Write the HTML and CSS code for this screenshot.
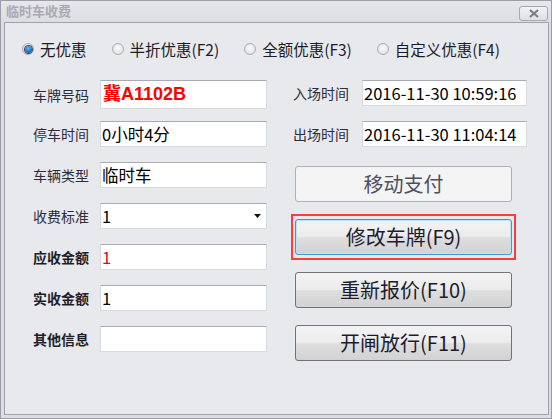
FILE: index.html
```html
<!DOCTYPE html>
<html lang="zh-CN">
<head>
<meta charset="utf-8">
<title>临时车收费</title>
<link rel="stylesheet" href="styles.css">
</head>
<body>
<div class="window">
  <div class="titlebar">
    <span class="title">临时车收费</span>
    <span class="close"><svg width="12" height="9" viewBox="0 0 12 9"><path d="M2 1 L10 8 M10 1 L2 8" stroke="#7b7c86" stroke-width="2.2" fill="none"/></svg></span>
  </div>
  <div class="frame">
    <div class="radios">
      <label class="opt"><span class="radio on"></span><span>无优惠</span></label>
      <label class="opt"><span class="radio"></span><span>半折优惠(F2)</span></label>
      <label class="opt"><span class="radio"></span><span>全额优惠(F3)</span></label>
      <label class="opt"><span class="radio"></span><span>自定义优惠(F4)</span></label>
    </div>
    <div class="cols">
      <div class="col-left">
        <div class="row row-tall"><span class="lbl">车牌号码</span><div class="inp inp-tall plate">冀A1102B</div></div>
        <div class="row"><span class="lbl">停车时间</span><div class="inp">0小时4分</div></div>
        <div class="row"><span class="lbl">车辆类型</span><div class="inp">临时车</div></div>
        <div class="row"><span class="lbl">收费标准</span><div class="inp select"><span>1</span><svg class="caret" width="7" height="4" viewBox="0 0 7 4"><path d="M0 0 H7 L3.5 4 Z" fill="#111"/></svg></div></div>
        <div class="row"><span class="lbl bold">应收金额</span><div class="inp red">1</div></div>
        <div class="row"><span class="lbl bold">实收金额</span><div class="inp">1</div></div>
        <div class="row"><span class="lbl bold">其他信息</span><div class="inp"></div></div>
      </div>
      <div class="col-right">
        <div class="row"><span class="lbl lbl-r">入场时间</span><div class="inp inp-r">2016-11-30 10:59:16</div></div>
        <div class="row"><span class="lbl lbl-r">出场时间</span><div class="inp inp-r">2016-11-30 11:04:14</div></div>
        <div class="buttons">
          <button class="btn disabled">移动支付</button>
          <div class="focus-ring"><button class="btn focused">修改车牌(F9)</button></div>
          <button class="btn">重新报价(F10)</button>
          <button class="btn">开闸放行(F11)</button>
        </div>
      </div>
    </div>
  </div>
</div>
</body>
</html>
```

FILE: styles.css
```css
* { box-sizing: border-box; }
html, body { margin: 0; padding: 0; }
body {
  width: 552px;
  height: 419px;
  background: #dcdde3;
  font-family: "Noto Sans CJK SC", "Noto Sans", sans-serif;
  color: #22222e;
}
.window {
  width: 552px;
  height: 419px;
  border: 1px solid #9c9da7;
  padding: 0 2px 3px 3px;
  display: flex;
  flex-direction: column;
  background: linear-gradient(#e6e7eb, #dcdde3 22px);
}
.titlebar {
  height: 21px;
  display: flex;
  align-items: center;
  justify-content: space-between;
  padding-left: 2px;
}
.title {
  font-size: 13px;
  font-weight: bold;
  color: #a9aab2;
  line-height: 13px;
  margin-top: -2px;
}
.close {
  width: 29px;
  height: 15px;
  margin-top: 3px;
  margin-right: 1px;
  border: 1px solid #a7a8b2;
  border-radius: 3px;
  background: linear-gradient(#f2f2f4, #dfe0e4);
  display: flex;
  align-items: center;
  justify-content: center;
}
.frame {
  flex: 1;
  border: 1px solid #a0a1ab;
  background: #e8e9ed;
}
.radios {
  display: flex;
  align-items: center;
  height: 20px;
  margin-top: 16px;
  padding-left: 17px;
  gap: 25px;
  font-size: 15.5px;
  color: #1c1c28;
}
.opt {
  display: flex;
  align-items: center;
  gap: 6px;
}
.radio {
  width: 12px;
  height: 12px;
  border-radius: 50%;
  border: 1px solid #a9abb3;
  background: radial-gradient(circle at 50% 40%, #fbfbfb, #d9dade);
  display: flex;
  align-items: center;
  justify-content: center;
}
.radio.on::after {
  content: "";
  width: 7px;
  height: 7px;
  border-radius: 50%;
  background: radial-gradient(circle at 45% 35%, #5cc0ff, #1a6fc0 60%, #0b3f7a);
  box-shadow: 0 0 0 1px #3b4a5c;
}
.cols {
  display: flex;
  margin-top: 21px;
  padding-left: 28px;
}
.col-left {
  width: 234px;
  display: flex;
  flex-direction: column;
  gap: 15px;
}
.row {
  display: flex;
  align-items: center;
  height: 26px;
}
.row-tall {
  height: 29px;
  margin-bottom: -3px;
}
.lbl {
  width: 67px;
  flex: none;
  font-size: 14px;
  color: #2c2c3a;
  white-space: nowrap;
}
.lbl.bold { font-weight: bold; color: #1e1e2a; }
.inp {
  width: 167px;
  height: 26px;
  background: #fff;
  border: 1px solid #d8dae0;
  border-top-color: #a9abb3;
  font-size: 16.5px;
  line-height: 24px;
  padding-left: 1px;
  color: #000;
  white-space: nowrap;
  overflow: hidden;
}
.inp-tall { height: 29px; line-height: 27px; padding-left: 2px; }
.plate { color: #ff0000; font-weight: bold; font-size: 18px; font-family: "Liberation Sans", "Noto Sans CJK SC", sans-serif; }
.red { color: #e8001c; }
.select {
  display: flex;
  justify-content: space-between;
  align-items: center;
  padding-right: 5px;
}
.caret { flex: none; }
.col-right {
  margin-left: 26px;
  display: flex;
  flex-direction: column;
  gap: 15px;
}
.lbl-r { width: 69px; }
.inp-r { width: 165px; }
.buttons {
  display: flex;
  flex-direction: column;
  align-items: flex-start;
  gap: 17px;
  margin-top: 4px;
  padding-left: 2px;
}
.btn {
  width: 217px;
  height: 36px;
  border: 1px solid #717178;
  border-radius: 3px;
  background: linear-gradient(#f3f3f3 0%, #ececec 48%, #dedede 52%, #d2d2d2 100%);
  font-family: "Noto Sans CJK SC", sans-serif;
  font-size: 20px;
  color: #1c1c30;
  padding: 0;
  line-height: 34px;
}
.btn.disabled {
  background: #f4f4f5;
  border-color: #adb0b6;
  color: #4e5060;
}
.focus-ring {
  margin: -5px -4px;
  padding: 3px 2px;
  border: 2px solid #fb3d3d;
  display: flex;
}
.btn.focused {
  border-color: #3d9ad6;
  box-shadow: inset 0 0 0 1px #bfe3f6;
}
```
